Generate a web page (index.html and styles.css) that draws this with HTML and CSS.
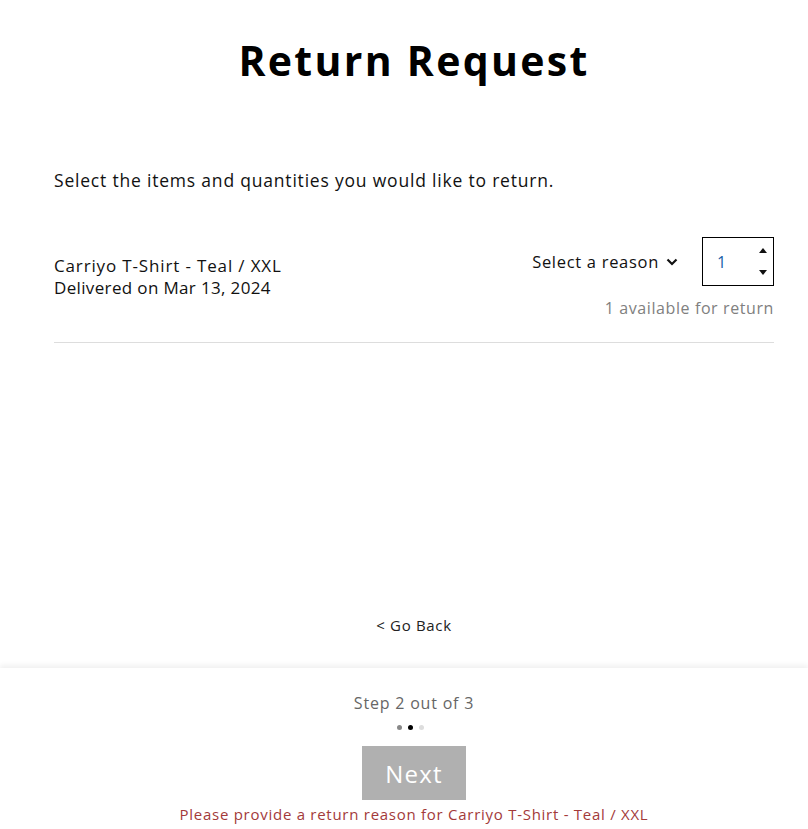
FILE: index.html
```html
<!DOCTYPE html>
<html>
<head>
<meta charset="utf-8">
<link rel="stylesheet" href="styles.css">
</head>
<body>
<div class="page">
  <main class="main">
    <h1 class="title">Return Request</h1>
    <p class="intro">Select the items and quantities you would like to return.</p>
    <div class="item">
      <div class="item-info">
        <div class="item-name">Carriyo T-Shirt - Teal / XXL</div>
        <div class="item-date">Delivered on Mar 13, 2024</div>
      </div>
      <div class="item-actions">
        <div class="controls">
          <div class="reason">Select a reason
            <svg class="chev" width="12" height="8" viewBox="0 0 12 8"><path d="M1.5 1.5 L6 6 L10.5 1.5" fill="none" stroke="#111" stroke-width="2.2"/></svg>
          </div>
          <div class="qty">
            <span class="qty-val">1</span>
            <div class="spin">
              <svg width="8" height="5" viewBox="0 0 8 5"><path d="M0 5 L4 0 L8 5Z" fill="#111"/></svg>
              <svg width="8" height="5" viewBox="0 0 8 5"><path d="M0 0 L4 5 L8 0Z" fill="#111"/></svg>
            </div>
          </div>
        </div>
        <div class="avail">1 available for return</div>
      </div>
    </div>
    <div class="spacer"></div>
    <a class="back">&lt; Go Back</a>
  </main>
  <footer class="footer">
    <div class="step">Step 2 out of 3</div>
    <div class="dots"><span class="dot d1"></span><span class="dot d2"></span><span class="dot d3"></span></div>
    <button class="next">Next</button>
    <div class="error">Please provide a return reason for Carriyo T-Shirt - Teal / XXL</div>
  </footer>
</div>
</body>
</html>
```

FILE: styles.css
```css
* { box-sizing: border-box; }
html, body { margin: 0; padding: 0; background: #fff; }
body { font-family: "Open Sans", "Liberation Sans", sans-serif; color: #111; letter-spacing: 0.7px; }
.page { min-height: 829px; height: 829px; display: flex; flex-direction: column; }
.main { flex: 1; display: flex; flex-direction: column; padding: 0 34px 0 54px; }
.title { margin: 34px 0 0; text-align: center; font-size: 41px; font-weight: 700; line-height: 52px; color: #000; letter-spacing: 2.3px; }
.intro { margin: 82px 0 0; font-size: 17.5px; line-height: 24px; letter-spacing: 0.8px; }
.item { display: flex; justify-content: space-between; margin-top: 45px; padding-bottom: 23px; border-bottom: 1px solid #ddd; }
.item-info { padding-top: 18px; font-size: 17px; line-height: 22px; }
.item-name { letter-spacing: 0.85px; }
.item-date { letter-spacing: 0.35px; }
.item-actions { display: flex; flex-direction: column; align-items: flex-end; }
.controls { display: flex; align-items: center; gap: 24px; }
.reason { display: flex; align-items: center; gap: 7px; font-size: 16.5px; letter-spacing: 0.7px; }
.chev { margin-top: 1px; }
.qty { width: 72px; height: 49px; border: 1px solid #000; display: flex; align-items: center; justify-content: space-between; padding: 0 6px 0 14px; }
.qty-val { color: #1a5fa8; font-size: 16px; letter-spacing: 0; }
.spin { display: flex; flex-direction: column; gap: 17px; }
.spin svg { display: block; }
.avail { margin-top: 11px; color: #808080; font-size: 16px; line-height: 22px; letter-spacing: 0.6px; }
.spacer { flex: 1; }
.back { text-align: center; font-size: 15px; line-height: 20px; color: #222; margin-bottom: 33px; letter-spacing: 0.67px; }
.footer { height: 161px; box-shadow: 0 -3px 5px rgba(0,0,0,0.06); display: flex; flex-direction: column; align-items: center; padding: 24px 34px 0 54px; }
.step { font-size: 16px; line-height: 22px; color: #666; letter-spacing: 0.8px; }
.dots { display: flex; gap: 6px; margin-top: 11px; margin-right: 8px; }
.dot { width: 5px; height: 5px; border-radius: 50%; }
.d1 { background: #888; }
.d2 { background: #000; }
.d3 { background: #ddd; }
.next { margin-top: 16px; width: 104px; height: 54px; border: 0; background: #b0b0b0; color: #fff; font-family: inherit; font-size: 24px; padding: 0; letter-spacing: 1.2px; }
.error { margin-top: 4px; color: #a33a3a; font-size: 15px; line-height: 20px; letter-spacing: 0.73px; }
```
